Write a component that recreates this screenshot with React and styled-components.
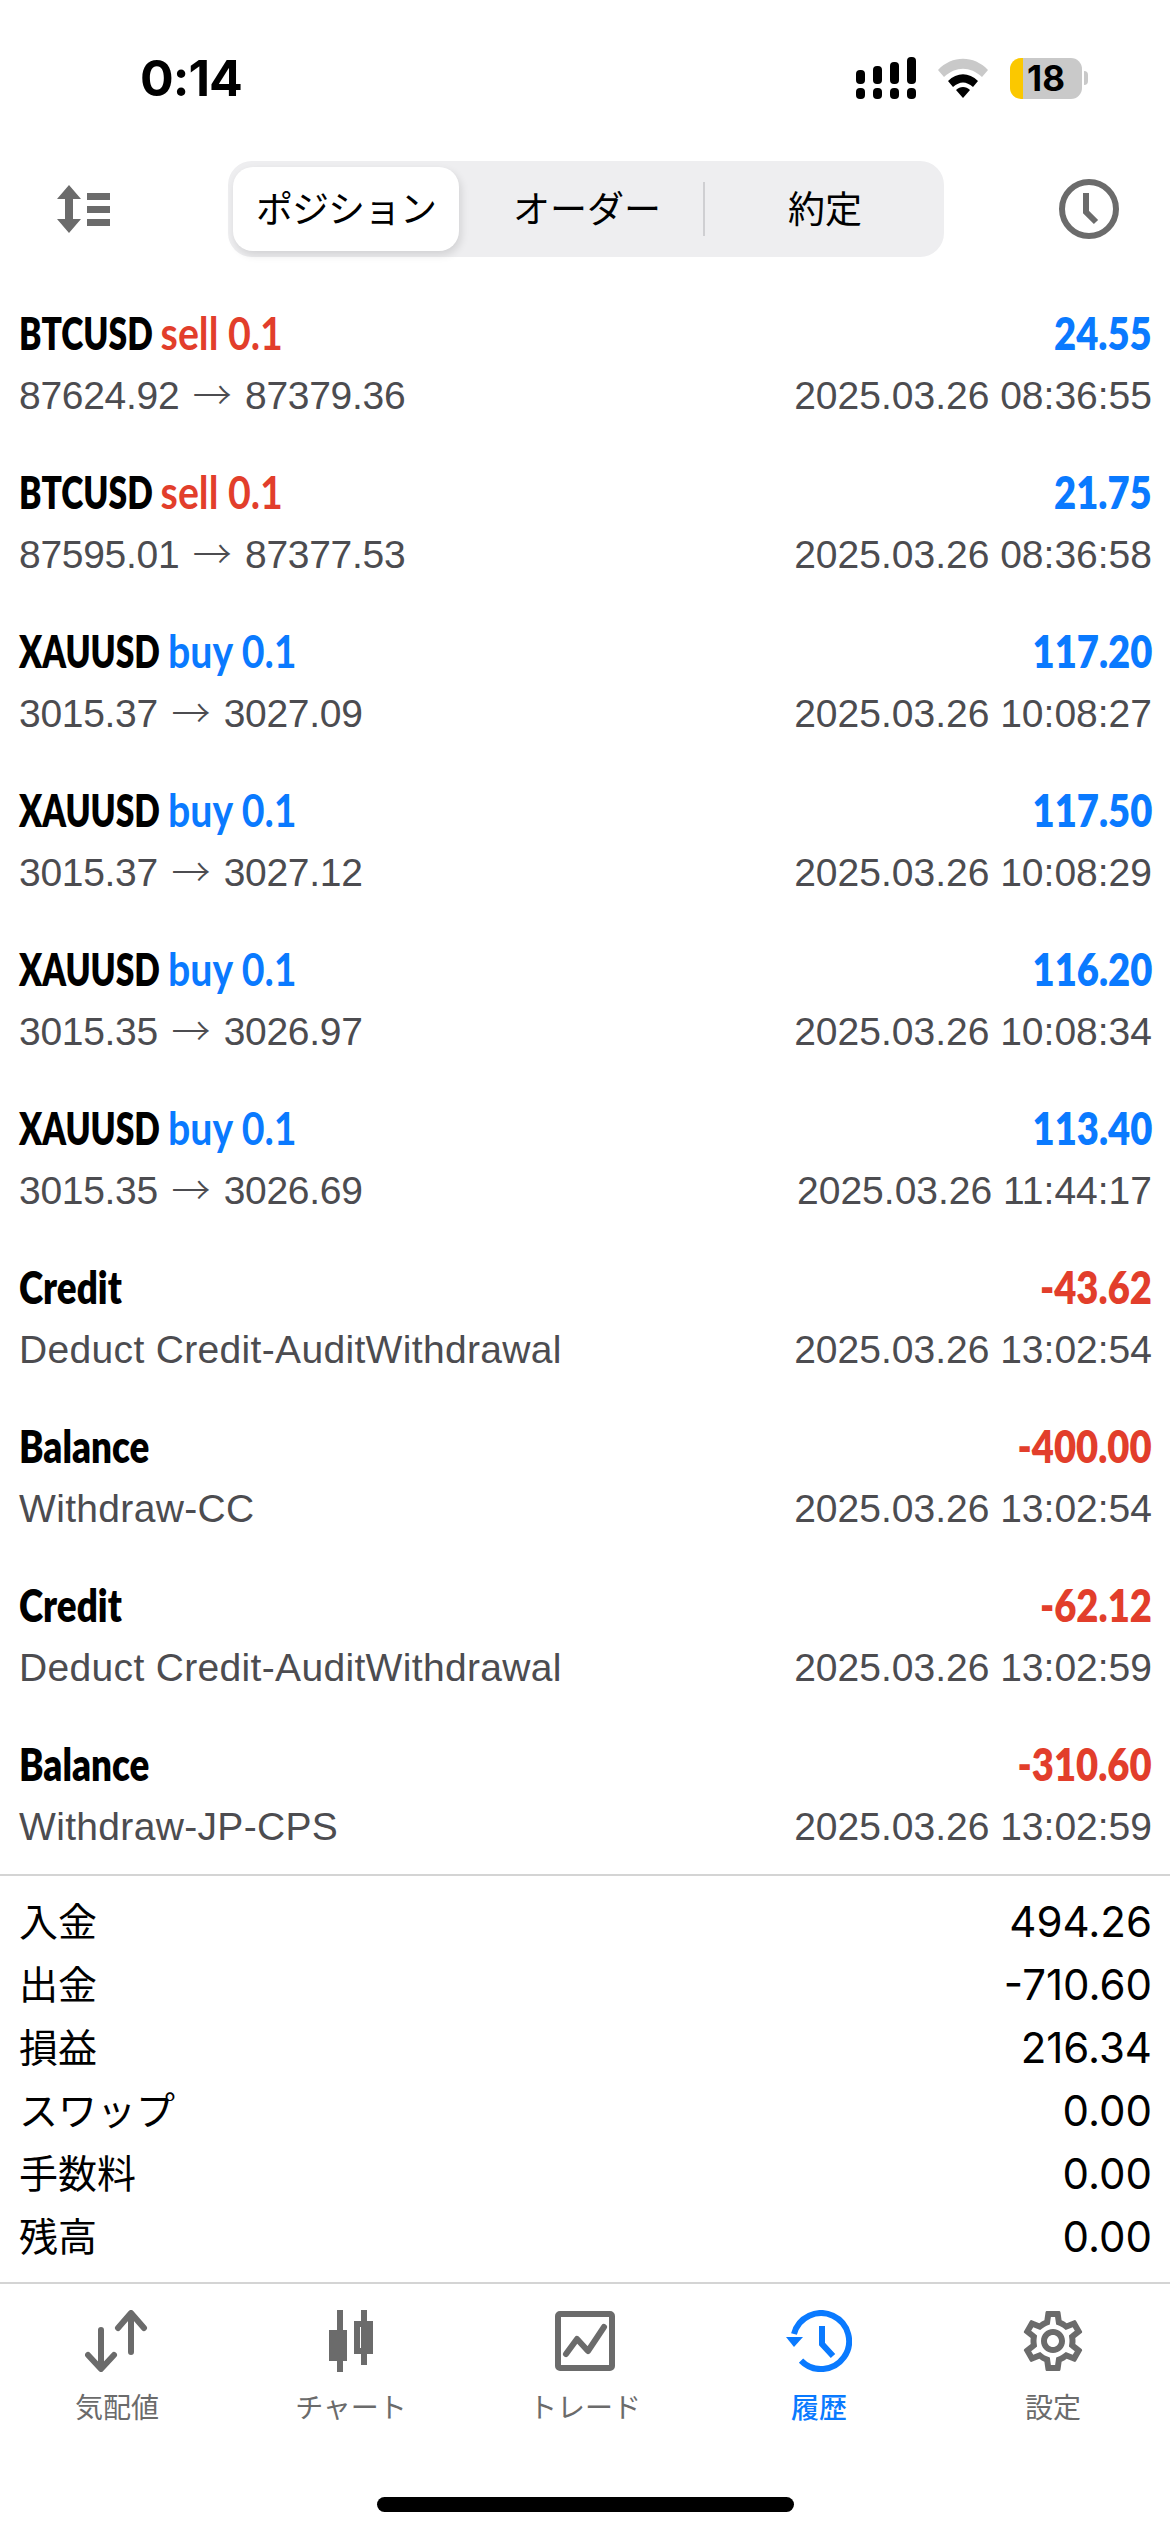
import React from 'react';
import styled, { createGlobalStyle } from 'styled-components';
import { MdOutlineSettings } from 'react-icons/md';

const GlobalStyle = createGlobalStyle`
  html, body {
    margin: 0;
    padding: 0;
    background: #fff;
  }
  * { box-sizing: border-box; }
`;

const BLUE = '#0a7aff';
const RED = '#e23e2b';
const GREY = '#6b6b6b';
const SANS = '"Liberation Sans", "Noto Sans CJK JP", sans-serif';
const CJK = '"Noto Sans CJK JP", sans-serif';

const Page = styled.div`
  width: 1170px;
  height: 2532px;
  background: #fff;
  overflow: hidden;
  display: flex;
  flex-direction: column;
`;

const StatusBar = styled.div`
  height: 161px;
  padding: 56px 82px 0 140px;
  display: flex;
  justify-content: space-between;
  align-items: flex-start;
`;

const Time = styled.div`
  font: 700 50px/44px Inter, sans-serif;
  letter-spacing: -1px;
  color: #000;
`;

const StatusIcons = styled.div`
  display: flex;
  gap: 22px;
  align-items: center;
  height: 44px;
`;

const Battery = styled.div`
  width: 72px;
  height: 41px;
  border-radius: 11px;
  overflow: hidden;
  background: linear-gradient(to right, #fbc800 0 13px, #c9c9c9 13px);
  font: 700 35px/41px Inter, sans-serif;
  text-align: center;
  color: #000;
`;

const BatteryWrap = styled.div`
  display: flex;
  align-items: center;
  gap: 2px;
  &::after {
    content: '';
    width: 4px;
    height: 14px;
    border-radius: 0 4px 4px 0;
    background: #c9c9c9;
  }
`;

const Toolbar = styled.div`
  height: 96px;
  padding: 0 50px 0 56px;
  display: flex;
  align-items: center;
  justify-content: space-between;
`;

const Segments = styled.div`
  width: 716px;
  height: 96px;
  margin-left: 4px;
  padding: 6px 5px;
  border-radius: 24px;
  background: #eeeef0;
  display: grid;
  grid-template-columns: 226px 246px 1fr;
  align-items: center;
`;

const Segment = styled.div`
  position: relative;
  height: 84px;
  padding-left: ${p => p.$inset || 0}px;
  border-radius: 20px;
  font: 400 37px/80px ${CJK};
  letter-spacing: ${p => (p.$active ? '-1px' : '0')};
  text-align: center;
  color: #000;
  background: ${p => (p.$active ? '#fff' : 'transparent')};
  box-shadow: ${p => (p.$active ? '2px 4px 8px rgba(0,0,0,0.12)' : 'none')};
  ${p => p.$split && `
    &::after {
      content: '';
      position: absolute;
      right: 0;
      top: 15px;
      width: 2px;
      height: 54px;
      background: #cfcfd2;
    }
  `}
`;

const List = styled.div`
  padding: 44px 18px 16px 19px;
  display: flex;
  flex-direction: column;
  gap: 33px;
  border-bottom: 2px solid #d4d4d4;
`;

const Line = styled.div`
  display: flex;
  justify-content: space-between;
  align-items: center;
  height: 63px;
  white-space: nowrap;
`;

/* Lato squeezed sideways stands in for the condensed demi-bold of the original */
const Title = styled.div`
  font: 800 46px/63px Lato, sans-serif;
  color: #000;
  transform: scaleX(${p => (p.$plain ? 0.8 : 0.73)});
  transform-origin: left center;
`;

const Side = styled.span`
  display: inline-block;
  font-weight: 700;
  color: ${p => p.$color};
  transform: scaleX(1.17);
  transform-origin: left center;
`;

const Profit = styled.div`
  font: 800 46px/63px Lato, sans-serif;
  color: ${p => p.$color};
  transform: scaleX(0.83);
  transform-origin: right center;
`;

const Sub = styled.div`
  font: 400 39px/63px ${SANS};
  letter-spacing: ${p => p.$spacing || 0}px;
  color: #4c4c50;
`;

const Arrow = styled.span`
  font: 200 39px/1 ${CJK};
  margin: 0 3px;
`;

const Summary = styled.div`
  padding: 14px 18px 14px 19px;
  border-bottom: 2px solid #d4d4d4;
`;

const SumLabel = styled.div`
  padding-bottom: 4px;
  font: 400 39px/59px ${CJK};
  color: #000;
`;

const SumValue = styled.div`
  font: 400 42px/63px Inter, sans-serif;
  color: #000;
`;

const TabBar = styled.div`
  display: grid;
  grid-template-columns: repeat(5, 234px);
  padding-top: 24px;
`;

const Tab = styled.div`
  display: flex;
  flex-direction: column;
  align-items: center;
  color: ${p => (p.$active ? BLUE : GREY)};
`;

const TabIcon = styled.div`
  width: 76px;
  height: 66px;
  display: flex;
  align-items: center;
  justify-content: center;
`;

const TabLabel = styled.div`
  margin-top: 15px;
  font: ${p => (p.$active ? 500 : 400)} 28px/34px ${CJK};
`;

const HomeBar = styled.div`
  width: 417px;
  height: 15px;
  margin: 74px auto 0;
  border-radius: 8px;
  background: #000;
`;

const Signal = () => (
  <svg width="60" height="42" viewBox="0 0 60 42" fill="#000">
    <rect x="0" y="13" width="9" height="14" rx="4" />
    <rect x="17" y="9" width="9" height="18" rx="4" />
    <rect x="34" y="5" width="9" height="22" rx="4" />
    <rect x="51" y="0" width="9" height="27" rx="4" />
    <rect x="0" y="31" width="9" height="11" rx="4" />
    <rect x="17" y="31" width="9" height="11" rx="4" />
    <rect x="34" y="31" width="9" height="11" rx="4" />
    <rect x="51" y="31" width="9" height="11" rx="4" />
  </svg>
);

const Wifi = () => (
  <svg width="50" height="40" viewBox="0 0 50 40">
    <path d="M0 12 C14 -3 36 -3 50 12 L44 19 C32 8 18 8 6 19 Z" fill="#c9c9c9" />
    <path d="M10 23 C19 14 31 14 40 23 L35 29 C28 23 22 23 15 29 Z" fill="#000" />
    <path d="M18 32 C22 28 28 28 32 32 L25 40 Z" fill="#000" />
  </svg>
);

const SortIcon = () => (
  <svg width="54" height="48" viewBox="0 0 54 48" fill={GREY}>
    <path d="M13 0 L25 14 L17 14 L17 34 L25 34 L13 48 L1 34 L9 34 L9 14 L1 14 Z" />
    <rect x="31" y="8" width="23" height="7" />
    <rect x="31" y="21" width="23" height="7" />
    <rect x="31" y="34" width="23" height="7" />
  </svg>
);

const ClockIcon = () => (
  <svg width="62" height="62" viewBox="0 0 62 62" fill="none" stroke={GREY}>
    <circle cx="31" cy="31" r="27" strokeWidth="6" />
    <path d="M28 15 V34 L38 44" strokeWidth="6" />
  </svg>
);

const QuotesIcon = () => (
  <svg width="64" height="62" viewBox="0 0 64 62" fill="none" stroke="currentColor" strokeWidth="6" strokeLinecap="round" strokeLinejoin="round">
    <path d="M16 20 V58 M3 45 L16 59 L29 45" />
    <path d="M46 42 V4 M33 18 L46 3 L59 18" />
  </svg>
);

const ChartIcon = () => (
  <svg width="44" height="62" viewBox="0 0 44 62" fill="currentColor">
    <rect x="8" y="0" width="6" height="62" />
    <rect x="0" y="20" width="18" height="31" />
    <rect x="32" y="0" width="6" height="55" />
    <path fillRule="evenodd" d="M25 11 H44 V44 H25 Z M31 17 V38 H38 V17 Z" />
  </svg>
);

const TradeIcon = () => (
  <svg width="60" height="60" viewBox="0 0 60 60" fill="none" stroke="currentColor" strokeWidth="6">
    <rect x="3" y="3" width="54" height="54" rx="2" />
    <path d="M11 43 L22 28 L33 40 L49 16" strokeLinecap="round" strokeLinejoin="round" />
  </svg>
);

const HistoryIcon = () => (
  <svg width="66" height="62" viewBox="0 0 66 62" fill="none" stroke="currentColor">
    <path d="M15 50.6 A28 28 0 1 0 8 24" strokeWidth="6" />
    <path d="M0 27 H17 L8 37 Z" fill="currentColor" stroke="none" />
    <path d="M36 16 V34 L47 46" strokeWidth="6" />
  </svg>
);

const trades = [
  ['BTCUSD', 'sell 0.1', '24.55', '87624.92', '87379.36', '2025.03.26 08:36:55'],
  ['BTCUSD', 'sell 0.1', '21.75', '87595.01', '87377.53', '2025.03.26 08:36:58'],
  ['XAUUSD', 'buy 0.1', '117.20', '3015.37', '3027.09', '2025.03.26 10:08:27'],
  ['XAUUSD', 'buy 0.1', '117.50', '3015.37', '3027.12', '2025.03.26 10:08:29'],
  ['XAUUSD', 'buy 0.1', '116.20', '3015.35', '3026.97', '2025.03.26 10:08:34'],
  ['XAUUSD', 'buy 0.1', '113.40', '3015.35', '3026.69', '2025.03.26 11:44:17'],
  ['Credit', '', '-43.62', 'Deduct Credit-AuditWithdrawal', '', '2025.03.26 13:02:54'],
  ['Balance', '', '-400.00', 'Withdraw-CC', '', '2025.03.26 13:02:54'],
  ['Credit', '', '-62.12', 'Deduct Credit-AuditWithdrawal', '', '2025.03.26 13:02:59'],
  ['Balance', '', '-310.60', 'Withdraw-JP-CPS', '', '2025.03.26 13:02:59'],
];

const totals = [
  ['入金', '494.26'],
  ['出金', '-710.60'],
  ['損益', '216.34'],
  ['スワップ', '0.00'],
  ['手数料', '0.00'],
  ['残高', '0.00'],
];

const tabs = [
  ['気配値', <QuotesIcon />],
  ['チャート', <ChartIcon />],
  ['トレード', <TradeIcon />],
  ['履歴', <HistoryIcon />, true],
  ['設定', <MdOutlineSettings size={72} />],
];

const App = () => (
  <Page>
    <GlobalStyle />
    <StatusBar>
      <Time>0:14</Time>
      <StatusIcons>
        <Signal />
        <Wifi />
        <BatteryWrap>
          <Battery>18</Battery>
        </BatteryWrap>
      </StatusIcons>
    </StatusBar>
    <Toolbar>
      <SortIcon />
      <Segments>
        <Segment $active>ポジション</Segment>
        <Segment $split $inset={10}>オーダー</Segment>
        <Segment $inset={6}>約定</Segment>
      </Segments>
      <ClockIcon />
    </Toolbar>
    <List>
      {trades.map(([symbol, side, profit, from, to, date], i) => (
        <div key={i}>
          <Line>
            <Title $plain={!side}>
              {symbol}{side && ' '}
              {side && <Side $color={side.startsWith('sell') ? RED : BLUE}>{side}</Side>}
            </Title>
            <Profit $color={profit.startsWith('-') ? RED : BLUE}>{profit}</Profit>
          </Line>
          <Line>
            {to ? (
              <Sub $spacing={-0.3}>{from} <Arrow>→</Arrow> {to}</Sub>
            ) : (
              <Sub $spacing={0.33}>{from}</Sub>
            )}
            <Sub>{date}</Sub>
          </Line>
        </div>
      ))}
    </List>
    <Summary>
      {totals.map(([label, value]) => (
        <Line key={label}>
          <SumLabel>{label}</SumLabel>
          <SumValue>{value}</SumValue>
        </Line>
      ))}
    </Summary>
    <TabBar>
      {tabs.map(([label, icon, active]) => (
        <Tab key={label} $active={active}>
          <TabIcon>{icon}</TabIcon>
          <TabLabel $active={active}>{label}</TabLabel>
        </Tab>
      ))}
    </TabBar>
    <HomeBar />
  </Page>
);

export default App;
